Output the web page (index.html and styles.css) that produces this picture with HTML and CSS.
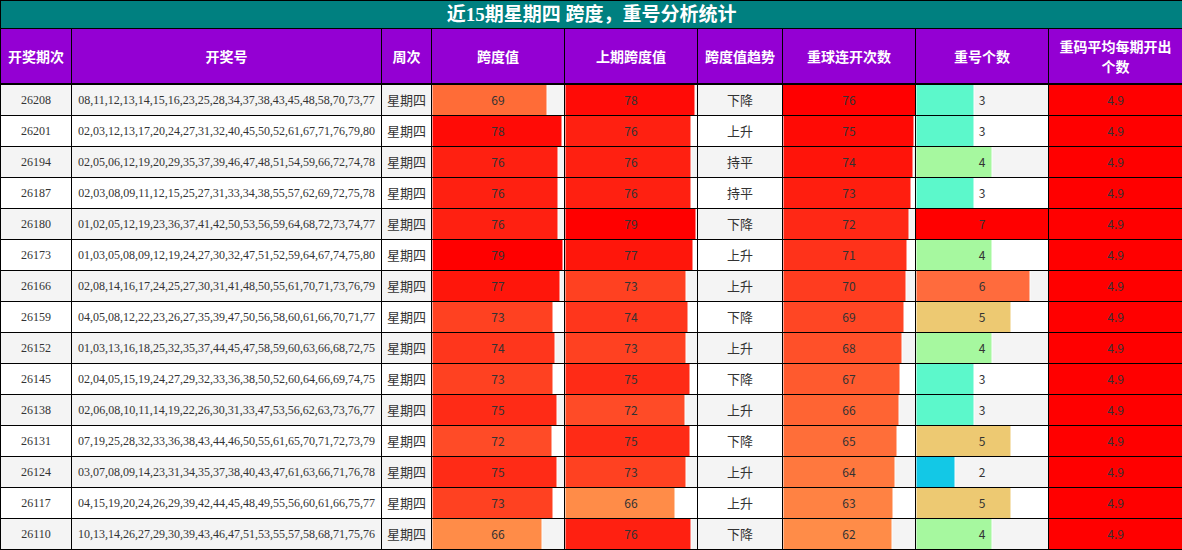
FILE: index.html
```html
<!DOCTYPE html>
<html lang="zh">
<head>
<meta charset="utf-8">
<title>跨度，重号分析统计</title>
<link rel="stylesheet" href="styles.css">
</head>
<body>
<table class="stats">
  <colgroup>
    <col class="c-issue"><col class="c-nums"><col class="c-week"><col class="c-span"><col class="c-span">
    <col class="c-trend"><col class="c-span"><col class="c-span"><col class="c-avg">
  </colgroup>
  <thead>
    <tr class="title-row"><th colspan="9">近15期星期四 跨度，重号分析统计</th></tr>
    <tr class="head-row">
      <th>开奖期次</th><th>开奖号</th><th>周次</th><th>跨度值</th><th>上期跨度值</th>
      <th>跨度值趋势</th><th>重球连开次数</th><th>重号个数</th><th>重码平均每期开出个数</th>
    </tr>
  </thead>
  <tbody>
    <tr><td>26208</td><td class="nums">08,11,12,13,14,15,16,23,25,28,34,37,38,43,45,48,58,70,73,77</td><td class="cjk">星期四</td><td class="bar" style="--w:86.25%;--c:#ff6c37">69</td><td class="bar" style="--w:97.5%;--c:#ff0b06">78</td><td class="cjk">下降</td><td class="bar" style="--w:100%;--c:#ff0000">76</td><td class="bar" style="--w:42.86%;--c:#5cf8cb">3</td><td class="bar" style="--w:100%;--c:#ff0000">4.9</td></tr>
    <tr><td>26201</td><td class="nums">02,03,12,13,17,20,24,27,31,32,40,45,50,52,61,67,71,76,79,80</td><td class="cjk">星期四</td><td class="bar" style="--w:97.5%;--c:#ff0b06">78</td><td class="bar" style="--w:95%;--c:#ff2011">76</td><td class="cjk">上升</td><td class="bar" style="--w:98.68%;--c:#ff0a05">75</td><td class="bar" style="--w:42.86%;--c:#5cf8cb">3</td><td class="bar" style="--w:100%;--c:#ff0000">4.9</td></tr>
    <tr><td>26194</td><td class="nums">02,05,06,12,19,20,29,35,37,39,46,47,48,51,54,59,66,72,74,78</td><td class="cjk">星期四</td><td class="bar" style="--w:95%;--c:#ff2011">76</td><td class="bar" style="--w:95%;--c:#ff2011">76</td><td class="cjk">持平</td><td class="bar" style="--w:97.37%;--c:#ff140a">74</td><td class="bar" style="--w:57.14%;--c:#a6f89f">4</td><td class="bar" style="--w:100%;--c:#ff0000">4.9</td></tr>
    <tr><td>26187</td><td class="nums">02,03,08,09,11,12,15,25,27,31,33,34,38,55,57,62,69,72,75,78</td><td class="cjk">星期四</td><td class="bar" style="--w:95%;--c:#ff2011">76</td><td class="bar" style="--w:95%;--c:#ff2011">76</td><td class="cjk">持平</td><td class="bar" style="--w:96.05%;--c:#ff1e0f">73</td><td class="bar" style="--w:42.86%;--c:#5cf8cb">3</td><td class="bar" style="--w:100%;--c:#ff0000">4.9</td></tr>
    <tr><td>26180</td><td class="nums">01,02,05,12,19,23,36,37,41,42,50,53,56,59,64,68,72,73,74,77</td><td class="cjk">星期四</td><td class="bar" style="--w:95%;--c:#ff2011">76</td><td class="bar" style="--w:98.75%;--c:#ff0000">79</td><td class="cjk">下降</td><td class="bar" style="--w:94.74%;--c:#ff2815">72</td><td class="bar" style="--w:100%;--c:#ff0000">7</td><td class="bar" style="--w:100%;--c:#ff0000">4.9</td></tr>
    <tr><td>26173</td><td class="nums">01,03,05,08,09,12,19,24,27,30,32,47,51,52,59,64,67,74,75,80</td><td class="cjk">星期四</td><td class="bar" style="--w:98.75%;--c:#ff0000">79</td><td class="bar" style="--w:96.25%;--c:#ff160b">77</td><td class="cjk">上升</td><td class="bar" style="--w:93.42%;--c:#ff321a">71</td><td class="bar" style="--w:57.14%;--c:#a6f89f">4</td><td class="bar" style="--w:100%;--c:#ff0000">4.9</td></tr>
    <tr><td>26166</td><td class="nums">02,08,14,16,17,24,25,27,30,31,41,48,50,55,61,70,71,73,76,79</td><td class="cjk">星期四</td><td class="bar" style="--w:96.25%;--c:#ff160b">77</td><td class="bar" style="--w:91.25%;--c:#ff4121">73</td><td class="cjk">上升</td><td class="bar" style="--w:92.11%;--c:#ff3c1f">70</td><td class="bar" style="--w:85.71%;--c:#ff6b3d">6</td><td class="bar" style="--w:100%;--c:#ff0000">4.9</td></tr>
    <tr><td>26159</td><td class="nums">04,05,08,12,22,23,26,27,35,39,47,50,56,58,60,61,66,70,71,77</td><td class="cjk">星期四</td><td class="bar" style="--w:91.25%;--c:#ff4121">73</td><td class="bar" style="--w:92.5%;--c:#ff361c">74</td><td class="cjk">下降</td><td class="bar" style="--w:90.79%;--c:#ff4624">69</td><td class="bar" style="--w:71.43%;--c:#edc972">5</td><td class="bar" style="--w:100%;--c:#ff0000">4.9</td></tr>
    <tr><td>26152</td><td class="nums">01,03,13,16,18,25,32,35,37,44,45,47,58,59,60,63,66,68,72,75</td><td class="cjk">星期四</td><td class="bar" style="--w:92.5%;--c:#ff361c">74</td><td class="bar" style="--w:91.25%;--c:#ff4121">73</td><td class="cjk">上升</td><td class="bar" style="--w:89.47%;--c:#ff5029">68</td><td class="bar" style="--w:57.14%;--c:#a6f89f">4</td><td class="bar" style="--w:100%;--c:#ff0000">4.9</td></tr>
    <tr><td>26145</td><td class="nums">02,04,05,15,19,24,27,29,32,33,36,38,50,52,60,64,66,69,74,75</td><td class="cjk">星期四</td><td class="bar" style="--w:91.25%;--c:#ff4121">73</td><td class="bar" style="--w:93.75%;--c:#ff2b16">75</td><td class="cjk">下降</td><td class="bar" style="--w:88.16%;--c:#ff5a2e">67</td><td class="bar" style="--w:42.86%;--c:#5cf8cb">3</td><td class="bar" style="--w:100%;--c:#ff0000">4.9</td></tr>
    <tr><td>26138</td><td class="nums">02,06,08,10,11,14,19,22,26,30,31,33,47,53,56,62,63,73,76,77</td><td class="cjk">星期四</td><td class="bar" style="--w:93.75%;--c:#ff2b16">75</td><td class="bar" style="--w:90%;--c:#ff4b27">72</td><td class="cjk">上升</td><td class="bar" style="--w:86.84%;--c:#ff6433">66</td><td class="bar" style="--w:42.86%;--c:#5cf8cb">3</td><td class="bar" style="--w:100%;--c:#ff0000">4.9</td></tr>
    <tr><td>26131</td><td class="nums">07,19,25,28,32,33,36,38,43,44,46,50,55,61,65,70,71,72,73,79</td><td class="cjk">星期四</td><td class="bar" style="--w:90%;--c:#ff4b27">72</td><td class="bar" style="--w:93.75%;--c:#ff2b16">75</td><td class="cjk">下降</td><td class="bar" style="--w:85.53%;--c:#ff6e39">65</td><td class="bar" style="--w:71.43%;--c:#edc972">5</td><td class="bar" style="--w:100%;--c:#ff0000">4.9</td></tr>
    <tr><td>26124</td><td class="nums">03,07,08,09,14,23,31,34,35,37,38,40,43,47,61,63,66,71,76,78</td><td class="cjk">星期四</td><td class="bar" style="--w:93.75%;--c:#ff2b16">75</td><td class="bar" style="--w:91.25%;--c:#ff4121">73</td><td class="cjk">上升</td><td class="bar" style="--w:84.21%;--c:#ff783e">64</td><td class="bar" style="--w:28.57%;--c:#13c8e6">2</td><td class="bar" style="--w:100%;--c:#ff0000">4.9</td></tr>
    <tr><td>26117</td><td class="nums">04,15,19,20,24,26,29,39,42,44,45,48,49,55,56,60,61,66,75,77</td><td class="cjk">星期四</td><td class="bar" style="--w:91.25%;--c:#ff4121">73</td><td class="bar" style="--w:82.5%;--c:#ff8c48">66</td><td class="cjk">上升</td><td class="bar" style="--w:82.89%;--c:#ff8243">63</td><td class="bar" style="--w:71.43%;--c:#edc972">5</td><td class="bar" style="--w:100%;--c:#ff0000">4.9</td></tr>
    <tr><td>26110</td><td class="nums">10,13,14,26,27,29,30,39,43,46,47,51,53,55,57,58,68,71,75,76</td><td class="cjk">星期四</td><td class="bar" style="--w:82.5%;--c:#ff8c48">66</td><td class="bar" style="--w:95%;--c:#ff2011">76</td><td class="cjk">下降</td><td class="bar" style="--w:81.58%;--c:#ff8c48">62</td><td class="bar" style="--w:57.14%;--c:#a6f89f">4</td><td class="bar" style="--w:100%;--c:#ff0000">4.9</td></tr>
  </tbody>
</table>
</body>
</html>
```

FILE: styles.css
```css
html, body {
  margin: 0;
  padding: 0;
  background: #ffffff;
}

.stats {
  width: 1182px;
  border-collapse: collapse;
  table-layout: fixed;
  font-family: "Liberation Serif", "Noto Sans CJK SC", serif;
  color: #333333;
}

.c-issue { width: 71px; }
.c-nums { width: 310px; }
.c-week { width: 50px; }
.c-span { width: 133px; }
.c-trend { width: 85px; }
.c-avg { width: 134px; }

.stats th,
.stats td {
  border: 1px solid #000000;
  padding: 0;
  text-align: center;
  vertical-align: middle;
}

.title-row th {
  height: 27px;
  background: #008080;
  color: #ffffff;
  font-size: 19px;
  font-weight: bold;
  line-height: 24px;
}

.head-row th {
  height: 54px;
  background: #9400d3;
  color: #ffffff;
  font-family: "Noto Sans CJK SC", sans-serif;
  font-size: 14px;
  font-weight: bold;
  line-height: 20px;
  border-bottom-width: 2px;
  padding: 0 4px;
}

.stats tbody tr:nth-child(odd) { background: #f4f4f4; }
.stats tbody tr:nth-child(even) { background: #ffffff; }

.stats tbody td {
  height: 30px;
  font-size: 12px;
  line-height: 16px;
}

.stats tbody .nums {
  font-size: 12px;
  white-space: nowrap;
}

.stats tbody .cjk {
  font-family: "Noto Sans CJK SC", sans-serif;
  font-size: 13px;
}

.stats tbody .bar {
  font-family: "Noto Sans CJK SC", sans-serif;
  font-size: 12px;
  font-weight: normal;
  color: #333333;
  background: linear-gradient(90deg,
    var(--c) 0,
    var(--c) var(--w),
    rgba(255, 255, 255, 0.75) var(--w),
    rgba(255, 255, 255, 0.75) calc(var(--w) + 1px),
    transparent calc(var(--w) + 1px));
}
```
